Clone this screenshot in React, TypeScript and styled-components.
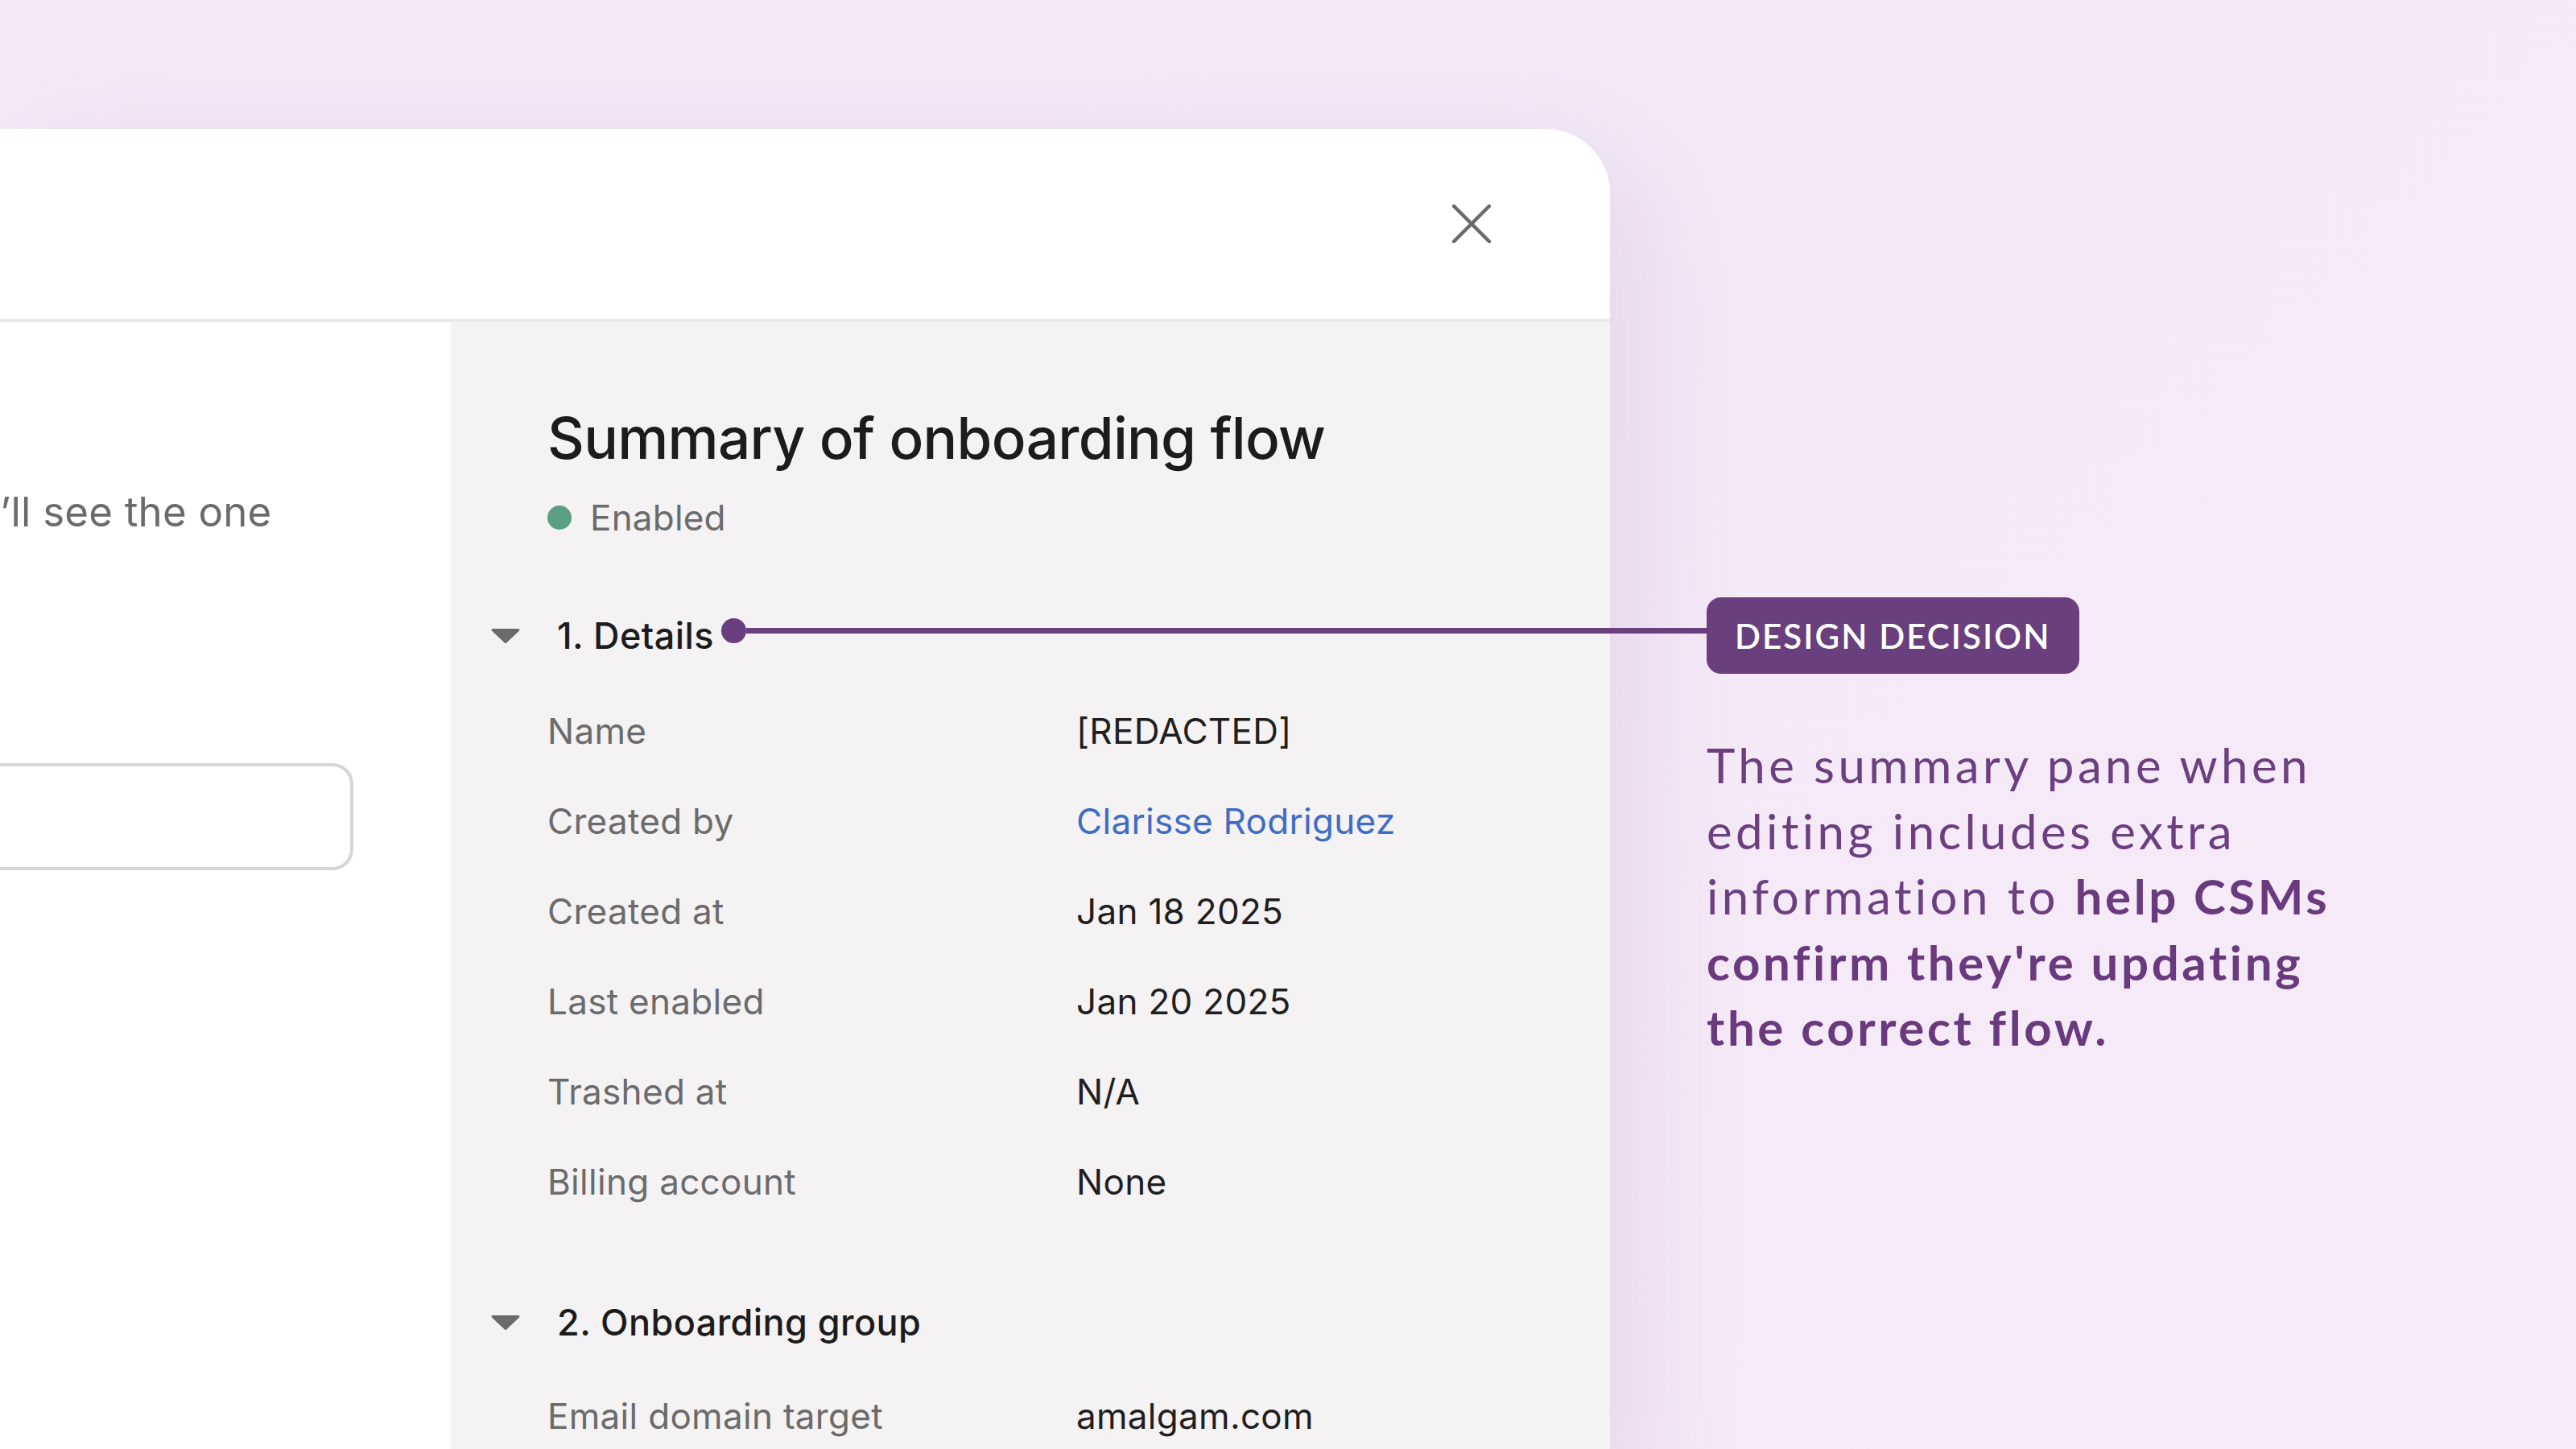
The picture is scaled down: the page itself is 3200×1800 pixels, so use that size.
import React from "react";
import styled, { createGlobalStyle } from "styled-components";

const GlobalStyle = createGlobalStyle`
  html, body { margin: 0; padding: 0; }
  body { background: #f5eaf7; font-family: Inter, "Liberation Sans", sans-serif; }
  * { box-sizing: border-box; }
`;

const Page = styled.div`
  position: relative;
  width: 3200px;
  height: 1800px;
  overflow: hidden;
  background: linear-gradient(135deg, #f5e9f7 0%, #f4e9f7 50%, #f7ebf8 100%);
  display: flex;
  align-items: flex-start;
  padding-top: 160px;
`;

const Modal = styled.div`
  width: 2000px;
  height: 1700px;
  flex-shrink: 0;
  background: #ffffff;
  border-radius: 0 80px 0 0;
  box-shadow: 30px 40px 150px rgba(120, 60, 150, 0.12);
  display: flex;
  flex-direction: column;
  overflow: hidden;
`;

const ModalHeader = styled.div`
  height: 240px;
  flex-shrink: 0;
  border-bottom: 4px solid #eae8ea;
  display: flex;
  align-items: center;
  justify-content: flex-end;
  padding-right: 148px;
`;

const CloseButton = styled.button`
  width: 48px;
  height: 48px;
  padding: 0;
  border: none;
  background: transparent;
  display: flex;
  align-items: center;
  justify-content: center;
  color: #6a6a6a;
`;

const ModalBody = styled.div`
  flex: 1;
  display: flex;
`;

const LeftPane = styled.div`
  width: 560px;
  flex-shrink: 0;
  background: #ffffff;
  overflow: hidden;
  padding-top: 204px;
  display: flex;
  flex-direction: column;
`;

const LeftText = styled.p`
  margin: 0;
  font-size: 51px;
  line-height: 64px;
  color: #6b6b6b;
  white-space: nowrap;
  letter-spacing: 0.2px;
`;

const InputBox = styled.div`
  margin-top: 280px;
  margin-left: -60px;
  width: 499px;
  height: 133px;
  border: 4px solid #d6d6d6;
  border-radius: 26px;
  background: #ffffff;
`;

const SummaryPane = styled.div`
  flex: 1;
  background: #f4f2f3;
  padding: 100px 0 0 120px;
  display: flex;
  flex-direction: column;
`;

const Title = styled.h1`
  margin: 0;
  font-size: 71px;
  line-height: 88px;
  font-weight: 500;
  color: #1c1c1c;
  letter-spacing: -0.7px;
`;

const Status = styled.div`
  margin-top: 25px;
  display: flex;
  align-items: center;
  gap: 23px;
  font-size: 44px;
  line-height: 60px;
  color: #6b6b6b;
  letter-spacing: 0.2px;
`;

const Dot = styled.span`
  width: 30px;
  height: 30px;
  border-radius: 50%;
  background: #5a9f83;
`;

const SectionHeader = styled.div<{ $gap: number }>`
  margin-top: ${(p) => p.$gap}px;
  margin-left: -70px;
  display: flex;
  align-items: center;
  gap: 46px;
  font-size: 45px;
  line-height: 60px;
  font-weight: 500;
  letter-spacing: 0.4px;
  color: #1c1c1c;
`;

const Caret = styled.svg`
  width: 36px;
  height: 20px;
  flex-shrink: 0;
`;

const Rows = styled.div<{ $gap: number }>`
  margin-top: ${(p) => p.$gap}px;
  display: flex;
  flex-direction: column;
`;

const Row = styled.div`
  height: 112px;
  display: grid;
  grid-template-columns: 657px 1fr;
  align-items: center;
  font-size: 44px;
  line-height: 60px;
  letter-spacing: 0.3px;
`;

const Label = styled.span`
  color: #6b6b6b;
`;

const Value = styled.span<{ $link?: boolean }>`
  color: ${(p) => (p.$link ? "#3f6cc4" : "#1f1f1f")};
`;

const Annotation = styled.div`
  margin-left: 120px;
  padding-top: 582px;
  display: flex;
  flex-direction: column;
  align-items: flex-start;
  font-family: Lato, "Open Sans", sans-serif;
`;

const Badge = styled.div`
  height: 95px;
  padding: 0 35px;
  border-radius: 18px;
  background: #6a3f7e;
  color: #ffffff;
  display: flex;
  align-items: center;
  font-size: 42px;
  font-weight: 600;
  letter-spacing: 2.1px;
`;

const Note = styled.p`
  margin: 73px 0 0 0;
  font-size: 60px;
  line-height: 81.6px;
  color: #6b3f80;
  font-weight: 400;
  letter-spacing: 4.4px;
  white-space: nowrap;
`;

const Strong = styled.strong`
  font-weight: 700;
  letter-spacing: 3.6px;
  color: #6a3a7e;
`;

const Connector = styled.div`
  position: absolute;
  left: 896px;
  top: 768px;
  width: 1226px;
  height: 31px;
  display: flex;
  align-items: center;
`;

const ConnectorDot = styled.span`
  width: 31px;
  height: 31px;
  border-radius: 50%;
  background: #6a3f7e;
  flex-shrink: 0;
`;

const ConnectorLine = styled.span`
  flex: 1;
  height: 7px;
  background: #6a3f7e;
`;

const CaretIcon = () => (
  <Caret viewBox="0 0 36 20">
    <path d="M2 1 H34 a1.5 1.5 0 0 1 1.1 2.5 L19.2 18.6 a1.7 1.7 0 0 1 -2.4 0 L0.9 3.5 A1.5 1.5 0 0 1 2 1 Z" fill="#6a6a6a" />
  </Caret>
);

const details: [string, string, boolean?][] = [
  ["Name", "[REDACTED]"],
  ["Created by", "Clarisse Rodriguez", true],
  ["Created at", "Jan 18 2025"],
  ["Last enabled", "Jan 20 2025"],
  ["Trashed at", "N/A"],
  ["Billing account", "None"],
];

export default function App() {
  return (
    <>
      <GlobalStyle />
      <Page>
        <Modal>
          <ModalHeader>
            <CloseButton aria-label="Close">
              <svg width="48" height="48" viewBox="0 0 48 48">
                <path d="M2 2 L46 46 M46 2 L2 46" stroke="currentColor" strokeWidth="4.5" strokeLinecap="round" />
              </svg>
            </CloseButton>
          </ModalHeader>
          <ModalBody>
            <LeftPane>
              <LeftText>’ll see the one</LeftText>
              <InputBox />
            </LeftPane>
            <SummaryPane>
              <Title>Summary of onboarding flow</Title>
              <Status>
                <Dot />
                Enabled
              </Status>
              <SectionHeader $gap={87}>
                <CaretIcon />
                <span>1. Details</span>
              </SectionHeader>
              <Rows $gap={32}>
                {details.map(([l, v, link]) => (
                  <Row key={l}>
                    <Label>{l}</Label>
                    <Value $link={link}>{v}</Value>
                  </Row>
                ))}
              </Rows>
              <SectionHeader $gap={89}>
                <CaretIcon />
                <span>2. Onboarding group</span>
              </SectionHeader>
              <Rows $gap={30}>
                <Row>
                  <Label>Email domain target</Label>
                  <Value>amalgam.com</Value>
                </Row>
              </Rows>
            </SummaryPane>
          </ModalBody>
        </Modal>
        <Annotation>
          <Badge>DESIGN DECISION</Badge>
          <Note>
            The summary pane when
            <br />
            editing includes extra
            <br />
            information to <Strong>help CSMs</Strong>
            <br />
            <Strong>confirm they're updating</Strong>
            <br />
            <Strong>the correct flow.</Strong>
          </Note>
        </Annotation>
        <Connector>
          <ConnectorDot />
          <ConnectorLine />
        </Connector>
      </Page>
    </>
  );
}
